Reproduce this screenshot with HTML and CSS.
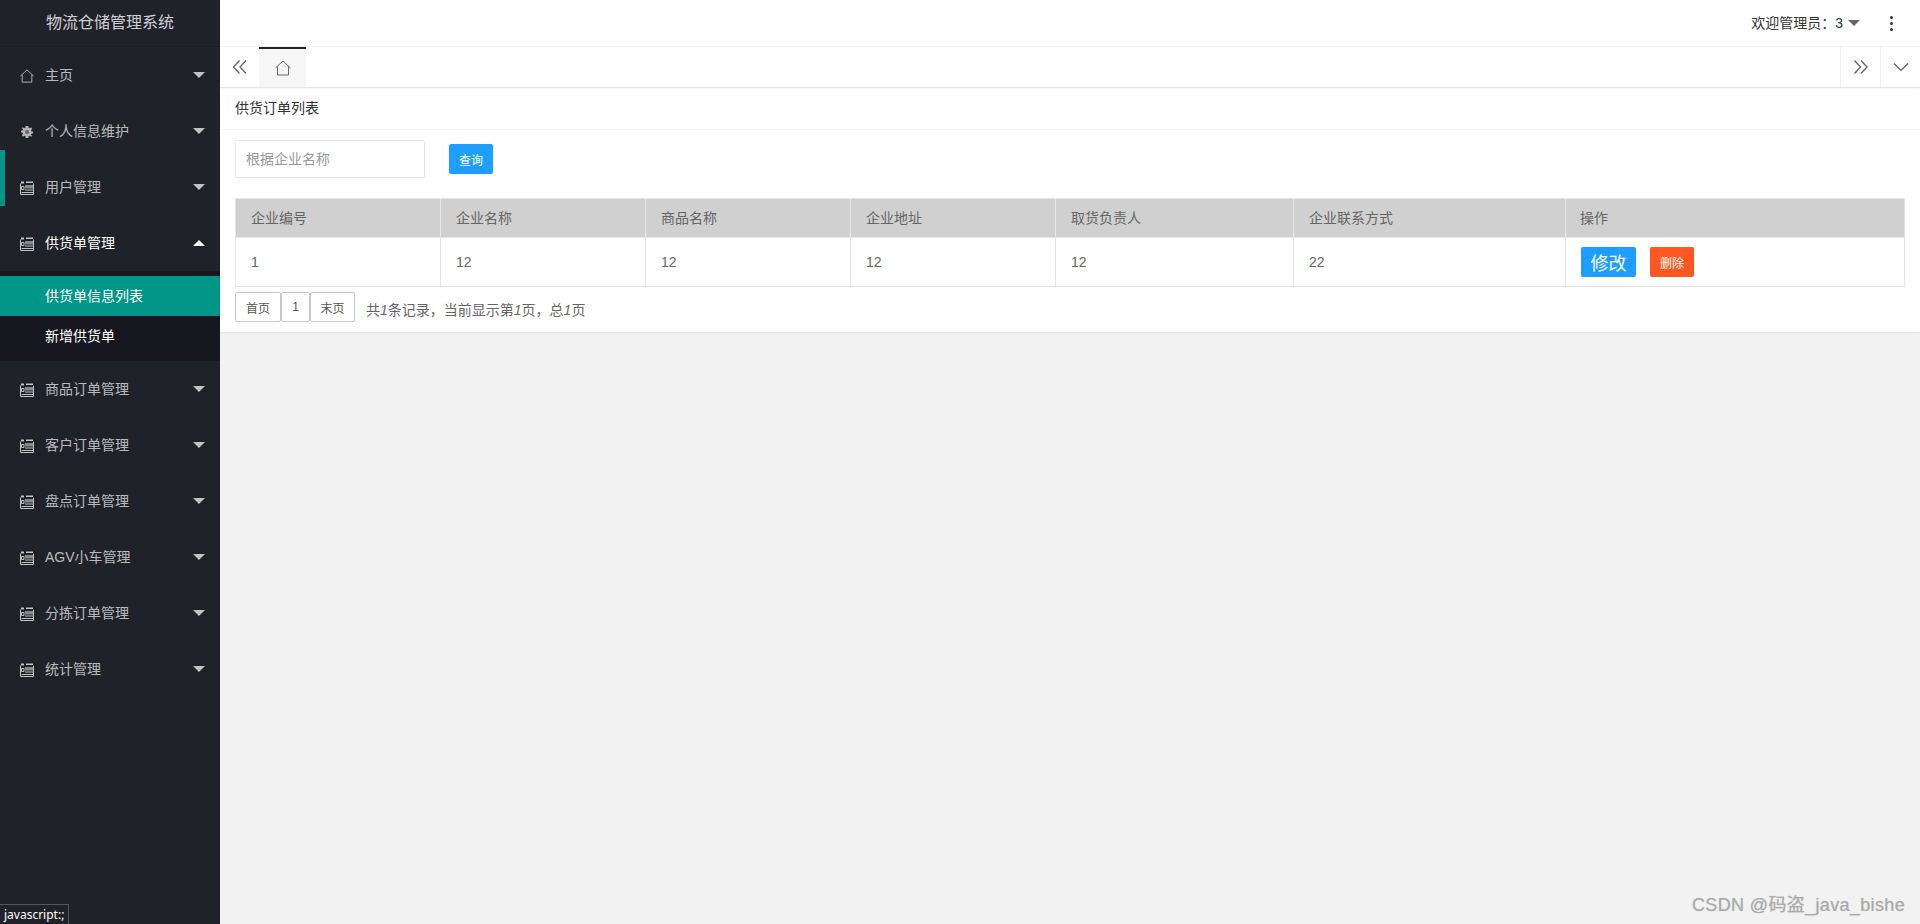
FILE: index.html
```html
<!DOCTYPE html>
<html lang="zh-CN">
<head>
<meta charset="utf-8">
<title>物流仓储管理系统</title>
<link rel="stylesheet" href="styles.css">
</head>
<body>
<svg class="defs" width="0" height="0" aria-hidden="true">
  <symbol id="i-home" viewBox="0 0 16 16"><path d="M.5 8 8 1l7.500 7M2.500 6.500V15h11V6.500" fill="none" stroke="currentColor" stroke-width="1"/></symbol>
  <symbol id="i-list" viewBox="0 0 14 14"><path d="M.5 2.500V13.500H13.500V2.500" fill="none" stroke="currentColor"/><path d="M1 .5h3v2H1zM6 .5h7v1.500H6z" fill="currentColor"/><path d="M5 4h8v3.500H5z" fill="currentColor" opacity=".65"/><path d="M1.500 5.500h2.500v3H1.500z" fill="none" stroke="currentColor"/><path d="M5 8.500h8v1H5zM1.500 11h11.500v1H1.500z" fill="currentColor"/></symbol>
  <symbol id="i-gear" viewBox="0 0 14 14"><path fill="currentColor" d="M5.500 0h3l.4 2 1.300.5L12 1.400 13.100 3.500 11.600 4.800 12 6l2 .4v2.200l-2 .4-.4 1.200 1.500 1.300L12 12.600l-1.800-1.100-1.300.5-.4 2h-3l-.4-2-1.300-.5L2 12.600.9 10.500 2.400 9.200 2 8l-2-.4V5.400L2 5l.4-1.200L.9 2.500 2 1.400l1.800 1.100 1.300-.5z"/><circle cx="7" cy="7" r="2.300" fill="#20222a" opacity=".55"/></symbol>
  <symbol id="i-dbl-left" viewBox="0 0 16 16"><path d="M7.500 1.500 1.500 8l6 6.500M14 1.500 8 8l6 6.500" fill="none" stroke="currentColor" stroke-width="1.300"/></symbol>
  <symbol id="i-dbl-right" viewBox="0 0 16 16"><path d="M1.500 1.500 7.500 8l-6 6.500M8 1.500 14 8l-6 6.500" fill="none" stroke="currentColor" stroke-width="1.300"/></symbol>
  <symbol id="i-down" viewBox="0 0 16 10"><path d="M1 1.500 8 8.500l7-7" fill="none" stroke="#555" stroke-width="1.100"/></symbol>
</svg>

<div class="app">
  <aside class="side">
    <div class="logo">物流仓储管理系统</div>
    <nav class="menu">
      <div class="menu-item"><svg class="mi"><use href="#i-home"/></svg><span class="ml">主页</span><i class="caret"></i></div>
      <div class="menu-item"><svg class="mi gear"><use href="#i-gear"/></svg><span class="ml">个人信息维护</span><i class="caret"></i></div>
      <div class="menu-item"><svg class="mi"><use href="#i-list"/></svg><span class="ml">用户管理</span><i class="caret"></i></div>
      <div class="menu-item open"><svg class="mi"><use href="#i-list"/></svg><span class="ml">供货单管理</span><i class="caret up"></i></div>
      <div class="submenu">
        <div class="sub-item active">供货单信息列表</div>
        <div class="sub-item">新增供货单</div>
      </div>
      <div class="menu-item"><svg class="mi"><use href="#i-list"/></svg><span class="ml">商品订单管理</span><i class="caret"></i></div>
      <div class="menu-item"><svg class="mi"><use href="#i-list"/></svg><span class="ml">客户订单管理</span><i class="caret"></i></div>
      <div class="menu-item"><svg class="mi"><use href="#i-list"/></svg><span class="ml">盘点订单管理</span><i class="caret"></i></div>
      <div class="menu-item"><svg class="mi"><use href="#i-list"/></svg><span class="ml">AGV小车管理</span><i class="caret"></i></div>
      <div class="menu-item"><svg class="mi"><use href="#i-list"/></svg><span class="ml">分拣订单管理</span><i class="caret"></i></div>
      <div class="menu-item"><svg class="mi"><use href="#i-list"/></svg><span class="ml">统计管理</span><i class="caret"></i></div>
    </nav>
    <span class="nav-bar"></span>
  </aside>

  <div class="main">
    <header class="top">
      <span class="welcome">欢迎管理员：3</span><i class="caret dark"></i>
      <span class="dots"><b></b><b></b><b></b></span>
    </header>
    <div class="tabs">
      <div class="tab-btn left"><svg class="ti"><use href="#i-dbl-left"/></svg></div>
      <div class="tab-home"><svg class="hi"><use href="#i-home"/></svg></div>
      <div class="tab-fill"></div>
      <div class="tab-btn edge"><svg class="ti"><use href="#i-dbl-right"/></svg></div>
      <div class="tab-btn edge"><svg class="di"><use href="#i-down"/></svg></div>
    </div>
    <section class="card">
      <div class="card-head">供货订单列表</div>
      <div class="card-body">
        <div class="search">
          <input class="input" type="text" placeholder="根据企业名称">
          <button class="btn btn-s" type="button">查询</button>
        </div>
        <table class="grid">
          <colgroup>
            <col class="c1"><col class="c1"><col class="c1"><col class="c1"><col class="c2"><col class="c3"><col>
          </colgroup>
          <thead>
            <tr><th>企业编号</th><th>企业名称</th><th>商品名称</th><th>企业地址</th><th>取货负责人</th><th>企业联系方式</th><th class="th-op">操作</th></tr>
          </thead>
          <tbody>
            <tr>
              <td>1</td><td>12</td><td>12</td><td>12</td><td>12</td><td>22</td>
              <td><div class="ops"><button class="btn btn-edit" type="button">修改</button><button class="btn btn-del" type="button">删除</button></div></td>
            </tr>
          </tbody>
        </table>
        <div class="pager">
          <a class="pg w">首页</a><a class="pg n">1</a><a class="pg w e">末页</a>
          <span class="pg-info">共<em>1</em>条记录，当前显示第<em>1</em>页，总<em>1</em>页</span>
        </div>
      </div>
    </section>
  </div>
</div>

<div class="status">javascript:;</div>
<div class="mark">CSDN @码盗_java_bishe</div>
</body>
</html>
```
FILE: styles.css
```css
* { box-sizing: border-box; }
html, body { margin: 0; height: 100%; overflow: hidden; }
body {
  font-family: "Liberation Sans", "Noto Sans CJK SC", sans-serif;
  font-size: 14px;
  color: #666;
  background: #f2f2f2;
}
.defs { position: absolute; }
.app { display: flex; height: 924px; }

.side { position: relative; width: 220px; flex: none; background: #20222a; }
.logo {
  height: 46px;
  padding-top: 1px;
  line-height: 44px;
  text-align: center;
  font-size: 16px;
  color: rgba(255, 255, 255, .8);
  box-shadow: 0 1px 0 rgba(0, 0, 0, .12);
}
.menu { padding-top: 1px; }
.menu-item {
  display: flex;
  align-items: center;
  height: 56px;
  padding-left: 20px;
  color: rgba(255, 255, 255, .7);
}
.menu-item.open { color: #fff; }
.mi { width: 14px; height: 14px; flex: none; margin-top: 2px; color: #c0c0c0; }
.mi.gear { width: 12px; height: 12px; margin: 1px 1px 0; color: #b4b4b4; }
.ml { margin-left: 11px; flex: 1; padding-bottom: 2px; }
.caret {
  width: 0; height: 0;
  margin-right: 15px;
  border-left: 6px solid transparent;
  border-right: 6px solid transparent;
  border-top: 6px solid #c2c2c2;
}
.caret.up { border-top: 0; border-bottom: 6px solid #fff; }
.caret.dark { margin: 0 0 0 5px; border-top-color: #666; }
.submenu { background: #17181f; padding-top: 5px; height: 90px; }
.sub-item { height: 40px; line-height: 40px; padding-left: 45px; color: #fff; }
.sub-item.active { background: #009688; }
.nav-bar { position: absolute; left: 0; top: 150px; width: 5px; height: 56px; background: #009688; }

.main { flex: 1; min-width: 0; display: flex; flex-direction: column; }
.top {
  display: flex;
  align-items: center;
  justify-content: flex-end;
  height: 47px;
  padding-right: 27px;
  background: #fff;
  border-bottom: 1px solid #f4f4f4;
  color: #333;
}
.welcome { font-family: "Liberation Sans", "Noto Sans CJK TC", sans-serif; padding-bottom: 2px; }
.dots { display: flex; flex-direction: column; gap: 3px; margin-left: 30px; }
.dots b { width: 3px; height: 3px; background: #333; border-radius: 50%; }

.tabs {
  display: flex;
  height: 41px;
  background: #fff;
  border-bottom: 1px solid #e8e8e8;
  box-shadow: 0 1px 2px rgba(0, 0, 0, .05);
  position: relative;
}
.tab-btn { display: flex; align-items: center; justify-content: center; width: 40px; color: #666; }
.tab-btn.left { width: 39px; }
.tab-btn.edge { border-left: 1px solid #f2f2f2; }
.ti { width: 16px; height: 16px; }
.di { width: 16px; height: 10px; }
.tab-home {
  display: flex;
  align-items: center;
  justify-content: center;
  width: 47px;
  background: #f6f6f6;
  border-top: 2px solid #20222a;
  color: #666;
}
.hi { width: 16px; height: 16px; }
.tab-fill { flex: 1; }

.card { background: #fff; box-shadow: 0 1px 2px rgba(0, 0, 0, .05); }
.card-head {
  height: 42px;
  line-height: 41px;
  padding-left: 15px;
  border-bottom: 1px solid #f6f6f6;
  color: #333;
}
.card-body { padding: 10px 15px 10px; }
.search { display: flex; align-items: center; height: 38px; }
.input {
  width: 190px;
  height: 38px;
  padding: 0 10px;
  border: 1px solid #e6e6e6;
  border-radius: 2px;
  font: 14px "Liberation Sans", "Noto Sans CJK SC", sans-serif;
  color: #666;
  outline: none;
}
.input::placeholder { color: #999; opacity: 1; }
.btn { border: 0; border-radius: 2px; color: #fff; padding: 0; font-family: inherit; }
.btn-s { width: 44px; height: 30px; margin-left: 24px; background: #1e9fff; font-size: 12px; }

.grid {
  width: 1670px;
  margin-top: 20px;
  table-layout: fixed;
  border-collapse: collapse;
}
.c1 { width: 205px; }
.c2 { width: 238px; }
.c3 { width: 272px; }
.grid th, .grid td {
  border: 1px solid #e6e6e6;
  padding: 0 15px;
  text-align: left;
  font-weight: 400;
  color: #666;
}
.grid th { height: 39px; padding-bottom: 2px; background: #d0d0d0; }
.grid .th-op { padding-left: 14px; }
.grid td { height: 49px; }
.ops { display: flex; align-items: center; gap: 14px; }
.btn-edit { width: 55px; height: 30px; background: #1e9fff; font-size: 18px; }
.btn-del { width: 44px; height: 30px; background: #ff5722; font-size: 12px; }

.pager { display: flex; align-items: center; margin-top: 5px; height: 30px; }
.pg {
  display: flex;
  align-items: center;
  justify-content: center;
  height: 30px;
  border: 1px solid #c9c9c9;
  border-radius: 2px;
  font-size: 12px;
  color: #555;
}
.pg.w { width: 46px; }
.pg.n { width: 29px; }
.pg.e { width: 45px; }
.pg-info { margin-left: 11px; padding-top: 4px; color: #666; }
.pg-info em { font-style: italic; }

.status {
  position: absolute;
  left: 0;
  bottom: 0;
  height: 20px;
  padding: 0 4px;
  line-height: 19px;
  font-size: 12px;
  font-family: "Noto Sans", "Liberation Sans", sans-serif;
  color: #fff;
  background: #20222a;
  border: 1px solid #555;
  border-width: 1px 1px 0 0;
}
.mark {
  position: absolute;
  right: 15px;
  bottom: 8px;
  font-size: 18px;
  letter-spacing: .35px;
  color: #aaa;
  text-shadow: 0 0 1px rgba(120, 120, 120, .4);
}
```
